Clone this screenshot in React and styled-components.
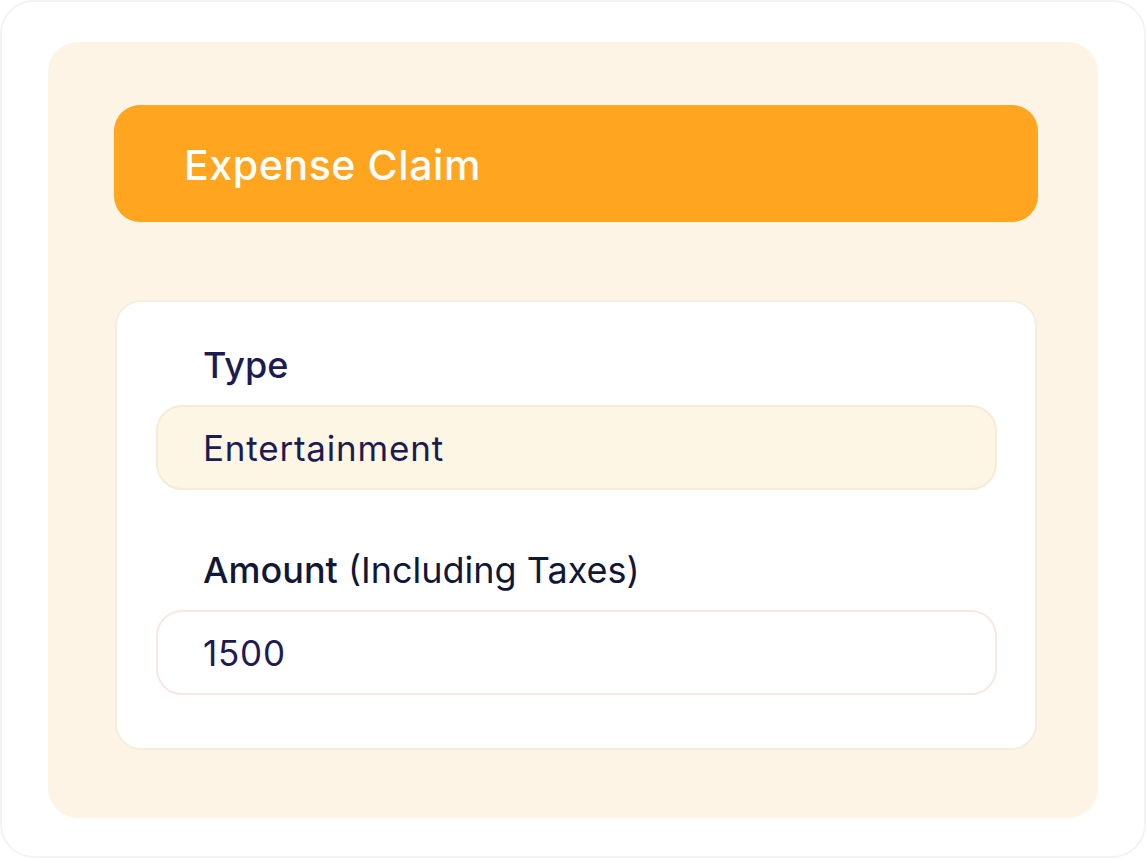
import React from 'react';
import styled, { createGlobalStyle } from 'styled-components';

const GlobalStyle = createGlobalStyle`
  html, body {
    margin: 0;
    padding: 0;
    background: #ffffff;
  }
  body {
    font-family: Inter, "Noto Sans", sans-serif;
  }
`;

function App() {
  return (
    <>
      <GlobalStyle />
      <Frame>
        <Panel>
          <Header>
            <Title>Expense Claim</Title>
          </Header>

          <FormCard>
            <Label strongAll>Type</Label>
            <Field filled>Entertainment</Field>

            <Label spaced>
              <strong>Amount</strong> (Including Taxes)
            </Label>
            <Field>1500</Field>
          </FormCard>
        </Panel>
      </Frame>
    </>
  );
}

// ************** Styling *****************
const Frame = styled.div`
  box-sizing: border-box;
  width: 1146px;
  height: 858px;
  border: 2px solid #f3f3f3;
  border-radius: 34px;
  padding: 40px 0 0 46px;
  background: #ffffff;
`;

const Panel = styled.div`
  box-sizing: border-box;
  width: 1050px;
  height: 776px;
  background: #fdf4e6;
  border-radius: 30px;
  padding: 63px 0 0 66px;
`;

const Header = styled.div`
  box-sizing: border-box;
  width: 924px;
  height: 117px;
  background: #ffa51f;
  border-radius: 26px;
  display: flex;
  align-items: center;
  padding: 2px 0 0 70px;
`;

const Title = styled.h1`
  margin: 0;
  color: #ffffff;
  font-size: 41px;
  font-weight: 500;
  letter-spacing: 0.6px;
`;

const FormCard = styled.div`
  box-sizing: border-box;
  width: 922px;
  height: 450px;
  margin: 78px 0 0 1px;
  background: #ffffff;
  border: 2px solid #f4eedc;
  border-radius: 26px;
  padding: 41px 38px 0 39px;
  display: flex;
  flex-direction: column;
`;

const Label = styled.div`
  font-size: 36px;
  line-height: 44px;
  color: ${p => (p.spaced ? '#101836' : '#1c1c52')};
  padding-left: 47px;
  margin-top: ${p => (p.spaced ? '58px' : '0')};
  margin-bottom: 18px;
  font-weight: ${p => (p.strongAll ? 500 : 400)};

  strong {
    font-weight: 500;
  }
`;

const Field = styled.div`
  box-sizing: border-box;
  height: 85px;
  border-radius: 26px;
  border: 2px solid ${p => (p.filled ? '#f5ecd8' : '#f5e9e1')};
  background: ${p => (p.filled ? '#fef6e5' : '#ffffff')};
  display: flex;
  align-items: center;
  padding-left: 45px;
  font-size: 35px;
  letter-spacing: 0.8px;
  color: #1c1c52;
`;

export default App;
